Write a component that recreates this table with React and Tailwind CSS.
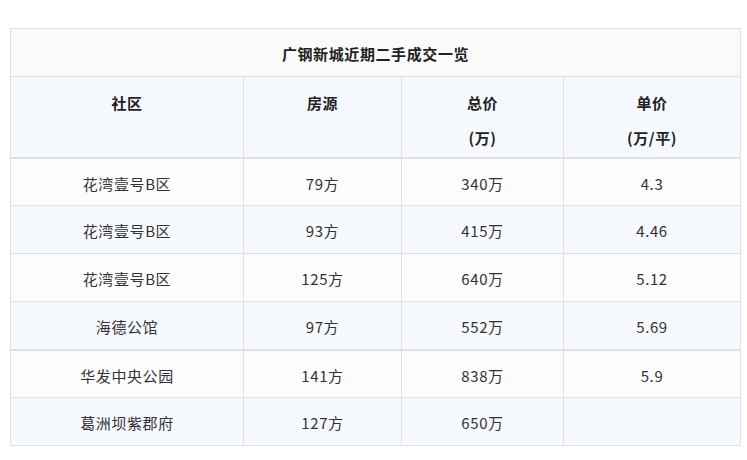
import React from 'react'

const rows = [
  ['花湾壹号B区', '79方', '340万', '4.3'],
  ['花湾壹号B区', '93方', '415万', '4.46'],
  ['花湾壹号B区', '125方', '640万', '5.12'],
  ['海德公馆', '97方', '552万', '5.69'],
  ['华发中央公园', '141方', '838万', '5.9'],
  ['葛洲坝紫郡府', '127方', '650万', ''],
]

const font = { fontFamily: '"Microsoft YaHei", "Noto Sans CJK SC", "Liberation Sans", sans-serif' }

export default function App() {
  return (
    <div className="min-h-[460px] bg-white pt-[28px] pl-[10px]" style={font}>
      <table className="w-[730px] table-fixed border-collapse text-[15px] tracking-[0.6px] text-[#333]">
        <colgroup>
          <col className="w-[233px]" />
          <col className="w-[158px]" />
          <col className="w-[162px]" />
          <col className="w-[177px]" />
        </colgroup>
        <thead>
          <tr className="h-[48px] bg-[#fafafa]">
            <th colSpan={4} className="border border-[#e0e0e0] pt-[3px] text-center font-bold text-[#222]">
              广钢新城近期二手成交一览
            </th>
          </tr>
          <tr className="bg-[#f5f9fe] leading-[35px]">
            <th className="h-[81px] border border-b-2 border-[#e0e0e0] align-top pt-[8px] font-bold text-[#222]">社区</th>
            <th className="border border-b-2 border-[#e0e0e0] align-top pt-[8px] font-bold text-[#222]">房源</th>
            <th className="border border-b-2 border-[#e0e0e0] align-top pt-[8px] font-bold text-[#222]">
              总价<br />(万)
            </th>
            <th className="border border-b-2 border-[#e0e0e0] align-top pt-[8px] font-bold text-[#222]">
              单价<br />(万/平)
            </th>
          </tr>
        </thead>
        <tbody>
          {rows.map((r, i) => (
            <tr key={i} className={`h-[48px] ${i % 2 === 0 ? 'bg-[#fcfcfc]' : 'bg-[#f6f9fe]'}`}>
              {r.map((c, j) => (
                <td
                  key={j}
                  className={`border border-[#e0e0e0] pt-[4px] text-center ${i === 3 ? 'border-b-2' : ''}`}
                >
                  {c}
                </td>
              ))}
            </tr>
          ))}
        </tbody>
      </table>
    </div>
  )
}
